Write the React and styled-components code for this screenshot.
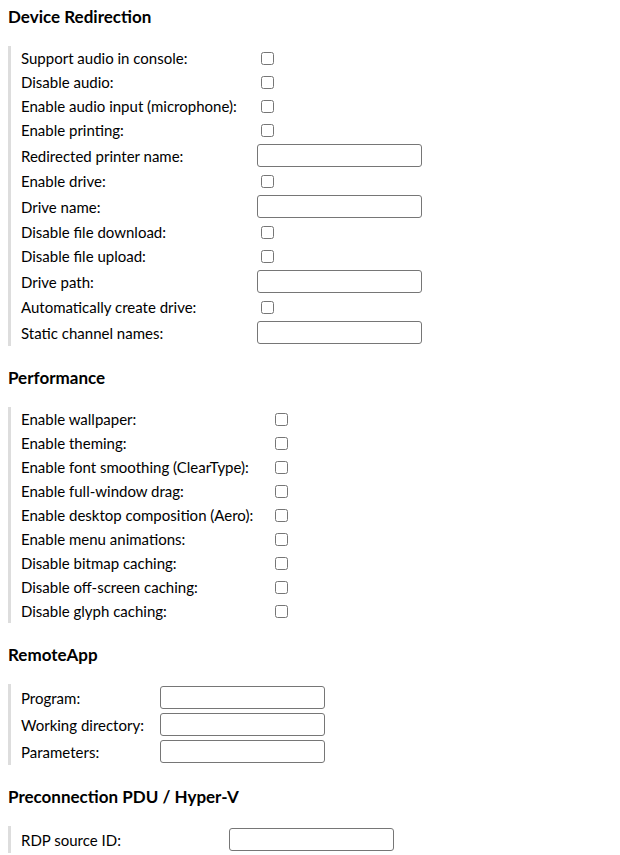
import React from 'react';
import styled, { createGlobalStyle } from 'styled-components';

const GlobalStyle = createGlobalStyle`
  body {
    margin: 0;
    background: #fff;
    font-family: Lato, 'Liberation Sans', sans-serif;
    color: #000;
  }
`;

const Page = styled.div`
  padding: 7px 8px 0;
`;

const SectionTitle = styled.h2`
  margin: 0 0 19px;
  font-size: 17px;
  line-height: 20px;
  font-weight: 700;
`;

const Fields = styled.div`
  display: grid;
  grid-template-columns: ${props => props.$labelWidth}px 1fr;
  border-left: 3px solid #ddd;
  padding-left: 10px;
  margin-bottom: 22px;
`;

const Label = styled.label`
  display: flex;
  align-items: center;
  height: ${props => props.$tall ? 27 : 24}px;
  font-size: 15px;
  white-space: nowrap;
`;

const Value = styled.div`
  display: flex;
  align-items: center;
  height: ${props => props.$tall ? 27 : 24}px;
`;

const Checkbox = styled.input.attrs({ type: 'checkbox' })`
  width: 13px;
  height: 13px;
  margin: 0 0 0 4px;
`;

const TextField = styled.input.attrs({ type: 'text' })`
  box-sizing: border-box;
  width: 165px;
  height: 23px;
  margin: 0;
  padding: 0 4px;
  border: 1px solid #767676;
  border-radius: 3px;
  font-family: inherit;
  font-size: 14px;
`;

const sections = [
  {
    title: 'Device Redirection',
    labelWidth: 236,
    fields: [
      ['Support audio in console:', 'check'],
      ['Disable audio:', 'check'],
      ['Enable audio input (microphone):', 'check'],
      ['Enable printing:', 'check'],
      ['Redirected printer name:', 'text'],
      ['Enable drive:', 'check'],
      ['Drive name:', 'text'],
      ['Disable file download:', 'check'],
      ['Disable file upload:', 'check'],
      ['Drive path:', 'text'],
      ['Automatically create drive:', 'check'],
      ['Static channel names:', 'text'],
    ],
  },
  {
    title: 'Performance',
    labelWidth: 250,
    fields: [
      ['Enable wallpaper:', 'check'],
      ['Enable theming:', 'check'],
      ['Enable font smoothing (ClearType):', 'check'],
      ['Enable full-window drag:', 'check'],
      ['Enable desktop composition (Aero):', 'check'],
      ['Enable menu animations:', 'check'],
      ['Disable bitmap caching:', 'check'],
      ['Disable off-screen caching:', 'check'],
      ['Disable glyph caching:', 'check'],
    ],
  },
  {
    title: 'RemoteApp',
    labelWidth: 139,
    fields: [
      ['Program:', 'text'],
      ['Working directory:', 'text'],
      ['Parameters:', 'text'],
    ],
  },
  {
    title: 'Preconnection PDU / Hyper-V',
    labelWidth: 208,
    fields: [
      ['RDP source ID:', 'text'],
    ],
  },
];

const App = () => (
  <>
    <GlobalStyle />
    <Page>
      {sections.map(section => (
        <section key={section.title}>
          <SectionTitle>{section.title}</SectionTitle>
          <Fields $labelWidth={section.labelWidth}>
            {section.fields.map(([label, type]) => {
              const tall = type === 'text';
              return (
                <React.Fragment key={label}>
                  <Label $tall={tall}>{label}</Label>
                  <Value $tall={tall}>
                    {tall ? <TextField /> : <Checkbox />}
                  </Value>
                </React.Fragment>
              );
            })}
          </Fields>
        </section>
      ))}
    </Page>
  </>
);

export default App;
